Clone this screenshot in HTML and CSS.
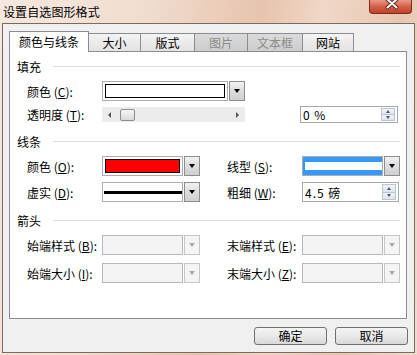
FILE: index.html
```html
<!DOCTYPE html>
<html lang="zh-CN">
<head>
  <meta charset="UTF-8">
  <title>设置自选图形格式</title>
  <link rel="stylesheet" href="styles.css">
</head>
<body>
  <div class="window">
    <div class="titlebar">
      <span class="title">设置自选图形格式</span>
      <span class="close">
        <svg width="43" height="14" viewBox="0 0 43 14">
          <path d="M18.5 0.5 L27.5 8.5 M27.5 0.5 L18.5 8.5" stroke="#6b2418" stroke-width="4" stroke-linecap="round"/>
          <path d="M18.5 0.5 L27.5 8.5 M27.5 0.5 L18.5 8.5" stroke="#ffffff" stroke-width="2" stroke-linecap="round"/>
        </svg>
      </span>
    </div>

    <div class="client">
      <div class="tabs">
        <div class="tab active t-line">颜色与线条</div>
        <div class="tab t-size">大小</div>
        <div class="tab t-layout">版式</div>
        <div class="tab off t-pic">图片</div>
        <div class="tab off t-text">文本框</div>
        <div class="tab t-web">网站</div>
      </div>

      <div class="panel">
        <div class="group first"><span>填充</span><i class="rule"></i></div>
        <div class="row">
          <span class="lbl">颜色 (<u>C</u>):</span>
          <div class="combo wide">
            <div class="field"><span class="swatch"></span></div>
            <span class="drop"><i class="tri"></i></span>
          </div>
        </div>
        <div class="row slim">
          <span class="lbl">透明度 (<u>T</u>):</span>
          <div class="slider">
            <i class="arr-l"></i>
            <span class="thumb"></span>
            <span class="track-fill"></span>
            <i class="arr-r"></i>
          </div>
          <div class="spin pct">
            <span class="spin-val">0 %</span>
            <span class="spin-btns"><b class="up"><i></i></b><b class="down"><i></i></b></span>
          </div>
        </div>

        <div class="group"><span>线条</span><i class="rule"></i></div>
        <div class="row">
          <span class="lbl">颜色 (<u>O</u>):</span>
          <div class="combo">
            <div class="field"><span class="swatch red"></span></div>
            <span class="drop"><i class="tri"></i></span>
          </div>
          <span class="lbl lbl-r">线型 (<u>S</u>):</span>
          <div class="combo">
            <div class="field sel"><span class="stripe"></span></div>
            <span class="drop"><i class="tri"></i></span>
          </div>
        </div>
        <div class="row">
          <span class="lbl">虚实 (<u>D</u>):</span>
          <div class="combo">
            <div class="field dash"><span class="solid"></span></div>
            <span class="drop"><i class="tri"></i></span>
          </div>
          <span class="lbl lbl-r">粗细 (<u>W</u>):</span>
          <div class="spin">
            <span class="spin-val">4.5 磅</span>
            <span class="spin-btns"><b class="up"><i></i></b><b class="down"><i></i></b></span>
          </div>
        </div>

        <div class="group"><span>箭头</span><i class="rule"></i></div>
        <div class="row">
          <span class="lbl">始端样式 (<u>B</u>):</span>
          <div class="combo off">
            <div class="field"></div>
            <span class="drop"><i class="tri"></i></span>
          </div>
          <span class="lbl lbl-r">末端样式 (<u>E</u>):</span>
          <div class="combo off">
            <div class="field"></div>
            <span class="drop"><i class="tri"></i></span>
          </div>
        </div>
        <div class="row last">
          <span class="lbl">始端大小 (<u>I</u>):</span>
          <div class="combo off">
            <div class="field"></div>
            <span class="drop"><i class="tri"></i></span>
          </div>
          <span class="lbl lbl-r">末端大小 (<u>Z</u>):</span>
          <div class="combo off">
            <div class="field"></div>
            <span class="drop"><i class="tri"></i></span>
          </div>
        </div>
      </div>

      <div class="buttons">
        <button class="btn">确定</button>
        <button class="btn">取消</button>
      </div>
    </div>
  </div>
</body>
</html>
```

FILE: styles.css
```css
* {
  box-sizing: border-box;
}
body {
  margin: 0;
  width: 417px;
  height: 355px;
  overflow: hidden;
  font-family: "Noto Sans CJK SC", "Liberation Sans", sans-serif;
  font-size: 12px;
  color: #000;
  background: linear-gradient(100deg, #f5e8df 0%, #f1ddd0 30%, #e7c4ad 55%, #f0d7c7 68%, #e8c7b2 84%, #f0dccf 100%);
}
.window {
  height: 355px;
  display: flex;
  flex-direction: column;
}

/* title bar */
.titlebar {
  height: 23px;
  display: flex;
  justify-content: space-between;
  align-items: flex-start;
  padding: 0 5px 0 3px;
}
.title {
  line-height: 23px;
  letter-spacing: 0.1px;
}
.close {
  width: 43px;
  height: 14px;
  display: block;
  border: 1px solid #7b2a1f;
  border-top: none;
  border-radius: 0 0 4px 4px;
  background: linear-gradient(#e79a86, #d4604b 50%, #c0402d);
}
.close svg {
  display: block;
  margin: -1px 0 0 -1px;
}

/* client area */
.client {
  flex: 1;
  margin: 0 2px 2px 2px;
  border: 1px solid #7d6a5e;
  background: #f0f0f0;
  display: flex;
  flex-direction: column;
}

/* tabs */
.tabs {
  display: flex;
  align-items: flex-end;
  height: 21px;
  margin: 7px 0 -1px 6px;
  position: relative;
  z-index: 1;
}
.tab {
  height: 19px;
  border: 1px solid #898c95;
  border-left: none;
  background: linear-gradient(#f4f4f4, #e2e2e2);
  text-align: center;
  line-height: 17px;
}
.tab.active {
  height: 21px;
  border-left: 1px solid #898c95;
  border-bottom: none;
  background: #fff;
  line-height: 20px;
}
.tab.off {
  background: linear-gradient(#dadada, #cdcdcd);
  color: #8c8c8c;
}
.t-line { width: 80px; }
.t-size { width: 52px; }
.t-layout { width: 54px; }
.t-pic { width: 53px; }
.t-text { width: 55px; }
.t-web { width: 51px; }

/* panel */
.panel {
  height: 268px;
  margin: 0 7px 0 6px;
  border: 1px solid #898c95;
  background: #fff;
}
.group {
  display: flex;
  align-items: center;
  height: 14px;
  margin: 11px 6px 0 7px;
}
.group.first {
  margin-top: 7px;
}
.rule {
  flex: 1;
  height: 1px;
  margin-left: 12px;
  background: #d8dee3;
}
.row {
  display: flex;
  align-items: center;
  height: 20px;
  margin-top: 6px;
  padding-left: 17px;
}
.group + .row {
  margin-top: 8px;
}
.row.slim {
  height: 17px;
  margin-top: 5px;
}
.row.last {
  margin-top: 8px;
}
.lbl {
  width: 75px;
  white-space: nowrap;
}
.lbl u {
  text-underline-offset: 1px;
}
.lbl-r {
  margin-left: 27px;
}

/* combo boxes */
.combo {
  display: flex;
  width: 98px;
  height: 20px;
}
.combo.wide {
  width: 143px;
}
.field {
  flex: 1;
  border: 1px solid #abadb3;
  padding: 2px;
  margin-right: 1px;
  background: #fff;
  display: flex;
  align-items: center;
}
.swatch {
  flex: 1;
  height: 14px;
  border: 1px solid #000;
  background: #fff;
}
.swatch.red {
  background: #ff0000;
}
.field.sel {
  padding: 0;
  border-color: #abadb3;
  background: #fff;
}
.field.sel .stripe {
  flex: 1;
  height: 100%;
  border-top: 5px solid #3399ff;
  border-bottom: 5px solid #3399ff;
  border-left: 2px solid #3399ff;
  background: #fff;
}
.field.dash {
  padding: 0 0 0 1px;
}
.solid {
  flex: 1;
  height: 3px;
  background: #000;
}
.drop {
  width: 16px;
  border: 1px solid #8a8d92;
  background: linear-gradient(#f2f2f2, #dcdcdc 50%, #cfcfcf);
  display: flex;
  align-items: center;
  justify-content: center;
}
.tri {
  width: 0;
  height: 0;
  border-top: 4px solid #000;
  border-left: 3.5px solid transparent;
  border-right: 3.5px solid transparent;
}
.combo.off .field {
  background: #f4f4f4;
  border-color: #b5b7bb;
}
.combo.off .drop {
  background: #f4f4f4;
  border-color: #c4c6c9;
}
.combo.off .tri {
  border-top-color: #a9a9a9;
}

/* slider */
.slider {
  width: 143px;
  height: 15px;
  background: #ececec;
  display: flex;
  align-items: center;
  padding: 0 6px 0 6px;
}
.arr-l, .arr-r {
  width: 0;
  height: 0;
  border-top: 3px solid transparent;
  border-bottom: 3px solid transparent;
}
.arr-l {
  border-right: 3px solid #555;
}
.arr-r {
  border-left: 3px solid #555;
}
.thumb {
  width: 15px;
  height: 12px;
  margin-left: 9px;
  border: 1px solid #8c8c8c;
  border-radius: 2px;
  background: linear-gradient(#f6f6f6, #dadada);
}
.track-fill {
  flex: 1;
}

/* spin boxes */
.spin {
  width: 97px;
  height: 20px;
  border: 1px solid #a5a8ad;
  background: #fff;
  display: flex;
  align-items: center;
  padding: 1px 2px 1px 0;
}
.spin.pct {
  width: 98px;
  height: 17px;
  margin-left: 55px;
}
.spin-val {
  flex: 1;
  padding-left: 2px;
  letter-spacing: 1px;
}
.spin-btns {
  width: 14px;
  height: 100%;
  display: flex;
  flex-direction: column;
}
.spin-btns b {
  flex: 1;
  border: 1px solid #bcc6d1;
  background: linear-gradient(#f1f5f9, #dce5ee);
  display: flex;
  align-items: center;
  justify-content: center;
}
.spin-btns .down {
  border-top: none;
}
.spin-btns i {
  width: 0;
  height: 0;
  border-left: 2.5px solid transparent;
  border-right: 2.5px solid transparent;
}
.spin-btns .up i {
  border-bottom: 3px solid #4d5a66;
}
.spin-btns .down i {
  border-top: 3px solid #4d5a66;
}

/* dialog buttons */
.buttons {
  display: flex;
  justify-content: flex-end;
  gap: 8px;
  margin: 8px 6px 0 0;
}
.btn {
  width: 73px;
  height: 18px;
  padding: 0;
  border: 1px solid #707070;
  border-radius: 3px;
  background: linear-gradient(#f4f4f4, #e9e9e9 50%, #d8d8d8);
  font-family: "Noto Sans CJK SC", "Liberation Sans", sans-serif;
  font-size: 12px;
  line-height: 16px;
  color: #000;
}
```
